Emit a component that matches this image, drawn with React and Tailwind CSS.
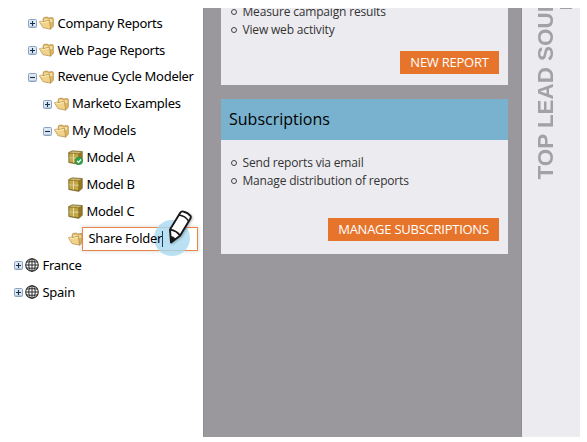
import React from "react";

function Toggle({ open }) {
  return (
    <svg className="h-[9px] w-[9px] shrink-0" viewBox="0 0 9 9">
      <rect x="0.5" y="0.5" width="8" height="8" rx="1" fill="#dce7f3" stroke="#8ba3c0" />
      <path d="M1 7.5h7" stroke="#b5c8de" />
      <path d={open ? "M2 4.5h5" : "M2 4.5h5M4.5 2v5"} stroke="#17314f" strokeWidth="1.1" />
    </svg>
  );
}

function Folder() {
  return (
    <svg className="h-[14px] w-[15px] shrink-0" viewBox="0 0 15 14">
      <path d="M4.2 5V2.3L5.1 1.5 8.4 1l1 1.1 4-.5.9.8v7.8l-2.8 3z" fill="#dfb965" stroke="#a98238" strokeWidth=".7" />
      <path d="m5 3 3-.6.9 1.1 4.4-.6v3L5 6z" fill="#f5dda0" />
      <path d="M.4 5.7 3 5l1.1.8 6.3-1.7 1.3 9-7.6-1.4z" fill="#f0d28a" stroke="#b08a3f" strokeWidth=".7" strokeLinejoin="round" />
      <path d="m1.3 6.3 1.5-.4 1.2.9 5.7-1.5" fill="none" stroke="#fff0bd" strokeWidth=".9" />
    </svg>
  );
}

function Model({ approved }) {
  return (
    <svg className="h-[15px] w-[15px] shrink-0" viewBox="0 0 15 15">
      <path d="M.6 2.6 4.2.8l10.1.7v9.8L10.8 14.4.8 12.6z" fill="#8a7124" stroke="#6f5a20" strokeWidth=".6" strokeLinejoin="round" />
      <path d="M1.2 2.6 4.4 1.2l9.2.7-3 1.5z" fill="#cdb974" />
      <path d="M1.3 3.5 5 3.8v3.8l-3.7-.3zM6.2 3.9l4.1.3v3.7l-4.1-.2zM1.3 8.4l3.7.3v3.7l-3.7-.6zM6.2 8.8l4.1.2v4.3l-4.1-.7z" fill="#c3a947" />
      <path d="M5.6 3.5v9.1M1.1 7.9l9.5.4" stroke="#f2e6ae" strokeWidth="1" />
      <path d="m11.3 4.1 2.4-1.5v8.1l-2.4 2.2z" fill="#97791f" />
      {approved && (
        <>
          <circle cx="10.9" cy="10.9" r="3.8" fill="#31a349" stroke="#24843a" strokeWidth=".5" />
          <path d="m9 10.9 1.5 1.5 2.5-2.9" fill="none" stroke="white" strokeWidth="1.2" />
        </>
      )}
    </svg>
  );
}

function Globe() {
  return (
    <svg className="h-[14px] w-[14px] shrink-0" viewBox="0 0 14 14" fill="none" stroke="#2b2b2b" strokeWidth="1">
      <circle cx="7" cy="7" r="6.3" strokeWidth="1.1" />
      <ellipse cx="7" cy="7" rx="3.2" ry="6.3" />
      <path d="M7 .8v12.4M.8 7h12.4M1.6 4.1q5.4-.8 10.8 0M1.6 9.9q5.4.8 10.8 0" />
    </svg>
  );
}

function Row({ indent, open, toggle = true, icon, children }) {
  return (
    <div className={`flex h-[26.9px] items-center ${indent}`}>
      {toggle && <span className="mr-[2px] flex"><Toggle open={open} /></span>}
      {icon}
      <span className="ml-[3.5px] whitespace-nowrap">{children}</span>
    </div>
  );
}

function Pencil() {
  return (
    <svg className="absolute left-[85px] top-[-19px] h-[36px] w-[26px] drop-shadow-[1px_1px_1px_rgba(0,0,0,0.25)]" viewBox="0 0 26 36">
      <path d="M2 20.5 12.4 3.6q1-1.6 2.9-1.1 4.6 1.1 7 4.1 1 1.4 0 3.1L12 26.7 3 33.5z" fill="white" stroke="#171717" strokeWidth="1.9" strokeLinejoin="round" />
      <path d="M2 20.6q6.8 1 10 6" fill="none" stroke="#171717" strokeWidth="1.9" />
      <path d="M10.9 6.1q6.4.9 9.7 6" fill="none" stroke="#171717" strokeWidth="1.5" />
      <path d="M2.4 27.5q3.6.2 5.2 2.7L3 33.7z" fill="#171717" stroke="#171717" strokeLinejoin="round" />
    </svg>
  );
}

function Bullet({ children }) {
  return (
    <li className="flex h-[18px] items-center gap-[5.5px] whitespace-nowrap">
      <span className="h-[6px] w-[6px] rounded-full border border-[#444]" />
      {children}
    </li>
  );
}

function ActionButton({ width, children }) {
  return (
    <button className={`flex h-[23px] items-center justify-center whitespace-nowrap bg-[#e7742b] text-[13px] tracking-[-0.25px] text-white ${width}`}>
      {children}
    </button>
  );
}

export default function App() {
  return (
    <div className="flex h-[442px] w-[587px] overflow-hidden bg-white pt-[8px] font-['Open_Sans','Noto_Sans',sans-serif] text-black">
      <aside className="w-[202.5px] shrink-0 pt-[2px] font-['Noto_Sans','Open_Sans',sans-serif] text-[13px] tracking-[-0.28px]">
        <Row indent="pl-[28px]" icon={<Folder />}>Company Reports</Row>
        <Row indent="pl-[28px]" icon={<Folder />}>Web Page Reports</Row>
        <Row indent="pl-[28px]" open icon={<Folder />}>Revenue Cycle Modeler</Row>
        <Row indent="pl-[42.5px]" icon={<Folder />}>Marketo Examples</Row>
        <Row indent="pl-[42.5px]" open icon={<Folder />}>My Models</Row>
        <Row indent="pl-[68px]" toggle={false} icon={<Model approved />}>Model A</Row>
        <Row indent="pl-[68px]" toggle={false} icon={<Model />}>Model B</Row>
        <Row indent="pl-[68px]" toggle={false} icon={<Model />}>Model C</Row>
        <div className="flex h-[26.9px] items-center pl-[68px]">
          <Folder />
          <div className="relative -ml-px flex h-[24px] w-[116px] items-center border border-[#e98549] bg-white pl-[5.5px] shadow-[0_0_4px_rgba(0,0,0,0.18)]">
            <span className="absolute left-[71px] top-[-8px] h-[36px] w-[36px] rounded-full bg-[#a9d9f0]/80" />
            <span className="relative whitespace-nowrap">Share Folder</span>
            <span className="absolute left-[79px] top-[3px] h-[16px] w-px bg-[#173d5a]" />
            <Pencil />
          </div>
        </div>
        <Row indent="pl-[14px]" icon={<Globe />}>France</Row>
        <Row indent="pl-[14px]" icon={<Globe />}>Spain</Row>
      </aside>

      <main className="flex h-[429px] w-[319.5px] shrink-0 flex-col gap-[13.5px] border-x border-[#8e8d92] bg-[#9a989d] pl-[17px] pr-[13px]">
        <section className="flex h-[77px] shrink-0 flex-col overflow-hidden bg-[#ecebf0] pl-[10.5px] pr-[9px] text-[12px] tracking-[-0.17px] text-[#333]">
          <ul className="-mt-[5.5px]">
            <Bullet>Measure campaign results</Bullet>
            <Bullet>View web activity</Bullet>
          </ul>
          <div className="mt-[12.5px] flex justify-end">
            <ActionButton width="w-[99px]">NEW REPORT</ActionButton>
          </div>
        </section>
        <section className="h-[155.5px] shrink-0 bg-[#ecebf0]">
          <h2 className="flex h-[41px] items-center bg-[#79b2ce] pl-[8.5px] text-[16px]">Subscriptions</h2>
          <ul className="pl-[10.5px] pt-[14.5px] text-[12px] tracking-[-0.17px] text-[#333]">
            <Bullet>Send reports via email</Bullet>
            <Bullet>Manage distribution of reports</Bullet>
          </ul>
          <div className="mt-[28px] flex justify-end pr-[9px]">
            <ActionButton width="w-[171px]">MANAGE SUBSCRIPTIONS</ActionButton>
          </div>
        </section>
      </main>

      <aside className="flex h-[429px] w-[58px] shrink-0 items-start overflow-hidden bg-[#ecebf0] pl-[11px]">
        <div className="flex h-[171.5px] w-[26px] shrink-0 rotate-180 items-start justify-center overflow-hidden">
          <span className="whitespace-nowrap font-['Liberation_Sans',Arial,sans-serif] text-[22.4px] font-bold leading-[26px] text-[#a2a1a4] [writing-mode:vertical-rl]">TOP LEAD SOURCES</span>
        </div>
        <span className="ml-[1px] h-px w-[12px] bg-[#a2a1a4]" />
      </aside>
    </div>
  );
}
